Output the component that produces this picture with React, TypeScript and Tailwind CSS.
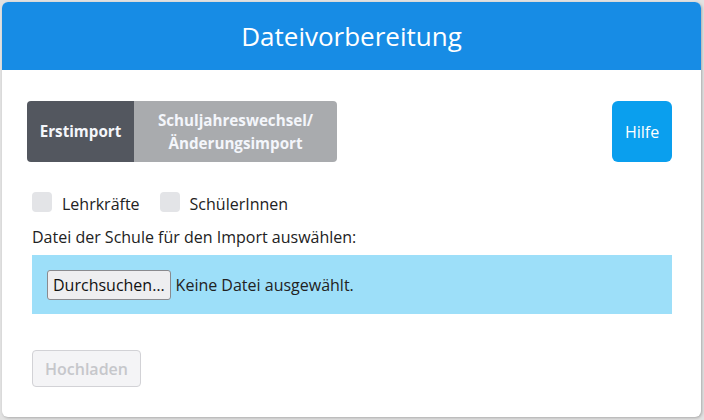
import { useState } from "react";

const font = { fontFamily: '"Open Sans", "Liberation Sans", sans-serif' };

export default function App() {
  const [mode, setMode] = useState<"erst" | "wechsel">("erst");
  const [lehrer, setLehrer] = useState(false);
  const [schueler, setSchueler] = useState(false);

  return (
    <div className="h-[420px] w-[704px] bg-[#e2e2e2] pt-[2px] pl-[2px] pr-[3px] pb-[3px]" style={font}>
      <div className="h-full w-full overflow-hidden rounded-[6px] bg-white shadow-[1px_1px_3px_rgba(0,0,0,0.25)]">
        {/* Kopfzeile */}
        <div className="flex h-[68px] items-center justify-center bg-[#178ce5] text-[26px] text-white">
          Dateivorbereitung
        </div>

        <div className="pl-[30px] pr-[29px] pt-[31px]">
          <div className="flex items-stretch justify-between">
            <div className="-ml-[5px] flex">
              <button
                onClick={() => setMode("erst")}
                className={
                  "h-[61px] w-[107px] rounded-l-[4px] text-[15.2px] font-bold text-[#f4f6fb] " +
                  (mode === "erst" ? "bg-[#53575f]" : "bg-[#a9abae]")
                }
              >
                Erstimport
              </button>
              <button
                onClick={() => setMode("wechsel")}
                className={
                  "h-[61px] w-[203px] rounded-r-[4px] text-[15.2px] font-bold leading-[23px] text-[#f4f6fb] " +
                  (mode === "wechsel" ? "bg-[#53575f]" : "bg-[#a9abae]")
                }
              >
                Schuljahreswechsel/
                <br />
                Änderungsimport
              </button>
            </div>
            <button className="h-[61px] w-[60px] rounded-[6px] bg-[#0a9fee] text-[16px] text-white">
              Hilfe
            </button>
          </div>

          {/* Auswahl */}
          <div className="mt-[30px] flex items-start text-[16px] text-[#222]">
            <label className="flex items-start gap-[10px]">
              <span
                onClick={() => setLehrer(!lehrer)}
                className={"h-[20px] w-[20px] rounded-[4px] " + (lehrer ? "bg-[#178ce5]" : "bg-[#e3e4e7]")}
              />
              <span className="pt-[2px] leading-[20px]">Lehrkräfte</span>
            </label>
            <label className="ml-[20px] flex items-start gap-[10px]">
              <span
                onClick={() => setSchueler(!schueler)}
                className={"h-[20px] w-[20px] rounded-[4px] " + (schueler ? "bg-[#178ce5]" : "bg-[#e3e4e7]")}
              />
              <span className="pt-[2px] leading-[20px]">SchülerInnen</span>
            </label>
          </div>

          <div className="mt-[12px] text-[16px] leading-[22px] text-[#222]">
            Datei der Schule für den Import auswählen:
          </div>

          <div className="mt-[7px] flex h-[59px] items-center bg-[#9ddff9] px-[15px] text-[16px] text-[#222]">
            <button className="h-[30px] rounded-[3px] border border-[#8a8a8e] bg-[#eeeef0] px-[5px] text-[16px] text-[#111]">
              Durchsuchen…
            </button>
            <span className="ml-[5px]">Keine Datei ausgewählt.</span>
          </div>

          <button
            disabled
            className="mt-[36px] h-[37px] w-[109px] rounded-[4px] border border-[#d2d2d6] bg-[#f4f4f6] text-[16px] font-semibold text-[#c6c7cb]"
          >
            Hochladen
          </button>
        </div>
      </div>
    </div>
  );
}
